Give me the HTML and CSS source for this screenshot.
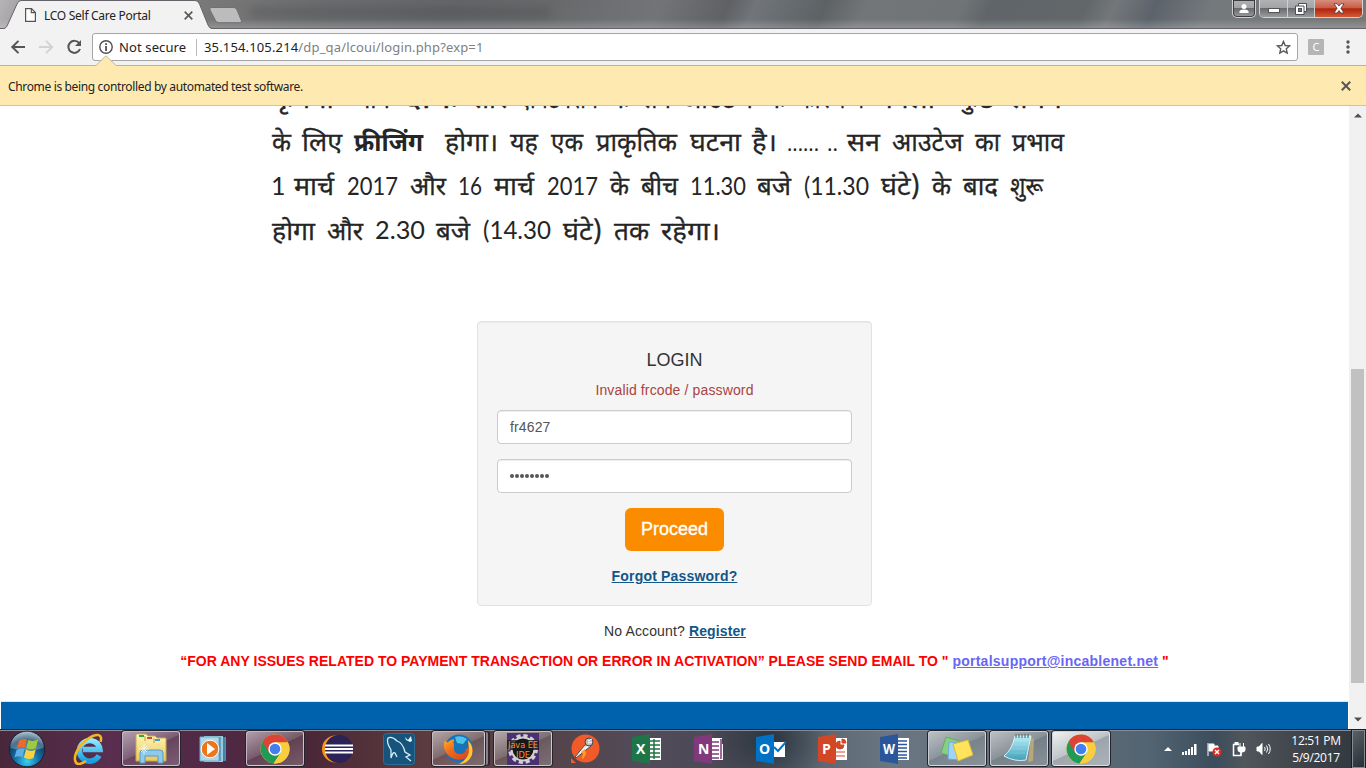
FILE: index.html
```
<!DOCTYPE html>
<html lang="en">
<head>
<meta charset="utf-8">
<title>LCO Self Care Portal</title>
<link rel="stylesheet" href="styles.css">
</head>
<body>
<svg class="defs" width="0" height="0">
  <defs>
    <linearGradient id="gold" x1="0" y1="0" x2="0" y2="1"><stop offset="0" stop-color="#fff6b8"/><stop offset="1" stop-color="#e9c95c"/></linearGradient>
    <radialGradient id="orb" cx=".5" cy=".85" r=".85"><stop offset="0" stop-color="#37d2f4"/><stop offset=".4" stop-color="#156ea5"/><stop offset=".72" stop-color="#123e63"/><stop offset="1" stop-color="#9bb6c6"/></radialGradient>
    <linearGradient id="ie" x1="0" y1="0" x2="0" y2="1"><stop offset="0" stop-color="#8fe6ff"/><stop offset="1" stop-color="#159fe0"/></linearGradient>
    <linearGradient id="glass" x1="0" y1="0" x2="0" y2="1"><stop offset="0" stop-color="#b9eef8"/><stop offset="1" stop-color="#3d9fba"/></linearGradient>
    <linearGradient id="fox" x1="0" y1="0" x2="1" y2="1"><stop offset="0" stop-color="#ffb22e"/><stop offset=".4" stop-color="#ee6a1b"/><stop offset="1" stop-color="#d63a22"/></linearGradient>
  </defs>
  <symbol id="chrome" viewBox="0 0 30 30">
    <circle cx="15" cy="15" r="14.5" fill="#f9ce3e"/>
    <path d="M15 15 2.5 7.7A14.5 14.5 0 0 0 13.6 29.4L21.300 18.5Z" fill="#219a55"/>
    <path d="M15 8.500H28A14.500 14.500 0 0 0 2.500 7.700L9 18.500Z" fill="#dc4535"/>
    <path d="m20.900 18-7.300 11.400A14.500 14.500 0 0 0 28 8.500H15Z" fill="#f9ce3e"/>
    <circle cx="15" cy="15" r="6.700" fill="#fff"/><circle cx="15" cy="15" r="5.300" fill="#4380ee"/>
  </symbol>
</svg>

<header class="titlebar">
  <div class="tab">
    <svg class="tab-shape" width="212" height="29"><path d="M0 28.500H4Q6.500 28 7.500 25L17 4Q18.500.5 21 .5H195Q198 .5 199.500 4L208 25Q209.500 28.500 212 28.500V30H0Z" fill="#f2f2f2" stroke="#66626a"/></svg>
    <div class="tab-body">
      <svg width="11" height="14" viewBox="0 0 11 14"><path d="M.6.6H6.500L10.400 4.500V13.400H.6ZM6.300.8V4.700H10.200" fill="#fff" stroke="#555" stroke-width="1.200"/></svg>
      <span class="tab-title">LCO Self Care Portal</span>
      <svg width="9" height="9" viewBox="0 0 9 9"><path d="M.7.7 8.300 8.300M8.300.7.7 8.300" stroke="#5a5a5a" stroke-width="1.700"/></svg>
    </div>
  </div>
  <svg class="new-tab" width="36" height="18"><path d="M2.500.5H25Q27 .5 28 3L32.500 14Q33 15.700 31 15.700H10Q7.500 15.700 6.500 13.500L1 3Q0 .5 2.500.5Z" fill="#bcbcbc" stroke="#707073"/></svg>
  <div class="backdrop-title"></div>
  <div class="window-buttons">
    <div class="wb user"><svg width="10" height="11" viewBox="0 0 10 11"><circle cx="5" cy="3.500" r="2.500" fill="#fff"/><path d="M.5 10V8.500Q1 6.500 5 6.500T9.500 8.500V10Z" fill="#fff"/></svg></div>
    <div class="wb-group">
      <div class="wb min"><svg width="12" height="5"><rect x=".5" y=".5" width="11" height="4" fill="#fff" stroke="#555"/></svg></div>
      <div class="wb max"><svg width="12" height="12"><path d="M3.500.5H11.500V8.500H9V11.500H.5V3H3.500Z" fill="#fff" stroke="#4d4d59"/><rect x="3.500" y="5.500" width="3" height="3" fill="#777" stroke="#4d4d59"/><path d="M3.500 3H9V8.500" fill="none" stroke="#4d4d59"/></svg></div>
      <div class="wb close"><svg width="12" height="11"><path d="M1 .8H4.200L6 3.100 7.800.8H11L7.900 5.300 11 10H7.800L6 7.500 4.200 10H1L4.100 5.300Z" fill="#fff" stroke="#5c3034" stroke-width=".8"/></svg></div>
    </div>
  </div>
</header>

<nav class="toolbar">
  <svg class="nav-icons" width="84" height="22" viewBox="0 0 84 22" fill="none" stroke-width="2">
    <path d="M25 11H13M18.500 4.900 12.300 11 18.500 17.100" stroke="#555"/>
    <path d="M39 11H52M46 4.900 52.200 11 46 17.100" stroke="#d3d3d3"/>
    <path d="M79.300 7.400A6 6 0 1 0 80 13" stroke="#555"/><path d="M81 4V10H75Z" fill="#555"/>
  </svg>
  <div class="omnibox">
    <svg width="14" height="14" viewBox="0 0 14 14"><circle cx="7" cy="7" r="6.200" fill="none" stroke="#4f4f4f" stroke-width="1.400"/><path d="M6.200 6h1.700v5H6.200ZM6.200 3.200h1.700v1.700H6.200Z" fill="#444"/></svg>
    <span class="insecure">Not secure</span>
    <span class="divider"></span>
    <span class="url">35.154.105.214<span class="path">/dp_qa/lcoui/login.php?exp=1</span></span>
    <svg class="star" width="15" height="15" viewBox="0 0 15 15"><path d="m7.500 1.500 1.700 4 4.300.4-3.200 2.900.9 4.300-3.700-2.200-3.700 2.200.9-4.300L1.500 5.900l4.300-.4Z" fill="none" stroke="#5a5a5a" stroke-width="1.400"/></svg>
  </div>
  <span class="ext">C</span>
  <svg class="kebab" width="4" height="14"><circle cx="2" cy="2" r="1.700"/><circle cx="2" cy="7" r="1.700"/><circle cx="2" cy="12" r="1.700"/></svg>
</nav>

<div class="infobar">
  <svg class="notch" width="22" height="12"><path d="M0 11 11 .5 22 11V12H0Z" fill="#feeab1"/><path d="M0 10.500H1L11 .8 21 10.500H22" fill="none" stroke="#bfb9a8"/></svg>
  <span class="info-text">Chrome is being controlled by automated test software.</span>
  <svg width="10" height="10" viewBox="0 0 10 10"><path d="M.8.8 9.200 9.200M9.200.8.8 9.200" stroke="#555" stroke-width="2"/></svg>
</div>

<div class="viewport">
  <main class="page">
    <svg class="notice" width="820" height="150" viewBox="260 106 820 150">
      <g>
        <text x="272" y="107.500" textLength="62" lengthAdjust="spacingAndGlyphs">कृपया</text>
        <text x="347" y="107.500" textLength="43" lengthAdjust="spacingAndGlyphs">ध्यान</text>
        <text x="402" y="107.500" textLength="57" lengthAdjust="spacingAndGlyphs">देंकि</text>
        <text x="471" y="107.500" textLength="36" lengthAdjust="spacingAndGlyphs">सौर</text>
        <text x="518" y="107.500" textLength="80" lengthAdjust="spacingAndGlyphs">एक्टिवेशन</text>
        <text x="610" y="107.500" textLength="20" lengthAdjust="spacingAndGlyphs">के</text>
        <text x="641" y="107.500" textLength="30" lengthAdjust="spacingAndGlyphs">सन</text>
        <text x="682" y="107.500" textLength="71" lengthAdjust="spacingAndGlyphs">आउटेज</text>
        <text x="766" y="107.500" textLength="20" lengthAdjust="spacingAndGlyphs">के</text>
        <text x="798" y="107.500" textLength="66" lengthAdjust="spacingAndGlyphs">कारण में</text>
        <text x="875" y="107.500" textLength="60" lengthAdjust="spacingAndGlyphs">चैनलों</text>
        <text x="959" y="107.500" textLength="37" lengthAdjust="spacingAndGlyphs">कुछ</text>
        <text x="1008" y="107.500" textLength="54" lengthAdjust="spacingAndGlyphs">समय</text>
      </g>
      <g>
        <text x="272" y="151" textLength="19" lengthAdjust="spacingAndGlyphs">के</text>
        <text x="302" y="151" textLength="40" lengthAdjust="spacingAndGlyphs">लिए</text>
        <text class="heavy" x="354" y="151" textLength="69" lengthAdjust="spacingAndGlyphs">फ्रीजिंग</text>
        <text x="445" y="151" textLength="53" lengthAdjust="spacingAndGlyphs">होगा।</text>
        <text x="510" y="151" textLength="28" lengthAdjust="spacingAndGlyphs">यह</text>
        <text x="551" y="151" textLength="32" lengthAdjust="spacingAndGlyphs">एक</text>
        <text x="596" y="151" textLength="81" lengthAdjust="spacingAndGlyphs">प्राकृतिक</text>
        <text x="690" y="151" textLength="51" lengthAdjust="spacingAndGlyphs">घटना</text>
        <text x="752" y="151" textLength="25" lengthAdjust="spacingAndGlyphs">है।</text>
        <text class="dots" x="787" y="151" textLength="32" lengthAdjust="spacingAndGlyphs">......</text>
        <text class="dots" x="827" y="151" textLength="11" lengthAdjust="spacingAndGlyphs">..</text>
        <text x="847" y="151" textLength="33" lengthAdjust="spacingAndGlyphs">सन</text>
        <text x="892" y="151" textLength="71" lengthAdjust="spacingAndGlyphs">आउटेज</text>
        <text x="975" y="151" textLength="25" lengthAdjust="spacingAndGlyphs">का</text>
        <text x="1012" y="151" textLength="52" lengthAdjust="spacingAndGlyphs">प्रभाव</text>
      </g>
      <g>
        <text class="num" x="271" y="195">1</text>
        <text x="294" y="195" textLength="40" lengthAdjust="spacingAndGlyphs">मार्च</text>
        <text class="num" x="347" y="195" textLength="51" lengthAdjust="spacingAndGlyphs">2017</text>
        <text x="410" y="195" textLength="36" lengthAdjust="spacingAndGlyphs">और</text>
        <text class="num" x="458" y="195" textLength="24" lengthAdjust="spacingAndGlyphs">16</text>
        <text x="494" y="195" textLength="40" lengthAdjust="spacingAndGlyphs">मार्च</text>
        <text class="num" x="547" y="195" textLength="51" lengthAdjust="spacingAndGlyphs">2017</text>
        <text x="610" y="195" textLength="19" lengthAdjust="spacingAndGlyphs">के</text>
        <text x="641" y="195" textLength="37" lengthAdjust="spacingAndGlyphs">बीच</text>
        <text class="num" x="690" y="195" textLength="56" lengthAdjust="spacingAndGlyphs">11.30</text>
        <text x="757" y="195" textLength="34" lengthAdjust="spacingAndGlyphs">बजे</text>
        <text class="num" x="804" y="195" textLength="65" lengthAdjust="spacingAndGlyphs">(11.30</text>
        <text x="881" y="195" textLength="39" lengthAdjust="spacingAndGlyphs">घंटे)</text>
        <text x="932" y="195" textLength="19" lengthAdjust="spacingAndGlyphs">के</text>
        <text x="963" y="195" textLength="35" lengthAdjust="spacingAndGlyphs">बाद</text>
        <text x="1010" y="195" textLength="33" lengthAdjust="spacingAndGlyphs">शुरू</text>
      </g>
      <g>
        <text x="272" y="240" textLength="43" lengthAdjust="spacingAndGlyphs">होगा</text>
        <text x="327" y="240" textLength="36" lengthAdjust="spacingAndGlyphs">और</text>
        <text class="num" x="375" y="239" textLength="50" lengthAdjust="spacingAndGlyphs">2.30</text>
        <text x="436" y="240" textLength="34" lengthAdjust="spacingAndGlyphs">बजे</text>
        <text class="num" x="483" y="239" textLength="68" lengthAdjust="spacingAndGlyphs">(14.30</text>
        <text x="563" y="240" textLength="39" lengthAdjust="spacingAndGlyphs">घंटे)</text>
        <text x="614" y="240" textLength="35" lengthAdjust="spacingAndGlyphs">तक</text>
        <text x="661" y="240" textLength="59" lengthAdjust="spacingAndGlyphs">रहेगा।</text>
      </g>
    </svg>
    <form class="login">
      <h1 class="login-title">LOGIN</h1>
      <p class="error">Invalid frcode / password</p>
      <div class="field">fr4627</div>
      <div class="field password"><i></i><i></i><i></i><i></i><i></i><i></i><i></i><i></i></div>
      <button class="proceed" type="button">Proceed</button>
      <a class="link forgot">Forgot Password?</a>
    </form>
    <p class="register">No Account? <a class="link">Register</a></p>
    <p class="support">“FOR ANY ISSUES RELATED TO PAYMENT TRANSACTION OR ERROR IN ACTIVATION” PLEASE SEND EMAIL TO " <a class="mail">portalsupport@incablenet.net</a> "</p>
    <footer class="footer"></footer>
  </main>
  <aside class="scrollbar">
    <svg width="8" height="5"><path d="M0 4.500 4 .5 8 4.500Z" fill="#505050"/></svg>
    <span class="thumb"></span>
    <svg width="8" height="5"><path d="M0 .5H8L4 4.500Z" fill="#505050"/></svg>
  </aside>
</div>

<div class="taskbar">
  <div class="start"><svg width="38" height="38" viewBox="0 0 38 38"><circle cx="19" cy="19" r="17.800" fill="url(#orb)" stroke="#1a2534"/><path d="M2.500 18A16.500 16.500 0 0 1 35.500 18Q19 23 2.500 18Z" fill="#fff" opacity=".25"/><path d="M11 10.500Q15 8 18.800 9.500L16.800 17.500Q12.500 16 9 18.500Z" fill="#ed6a2d"/><path d="M20.300 10Q25 12 30 9.500L28 18Q23 20.500 18.300 18Z" fill="#9ccb3b"/><path d="M8.500 20Q12.500 17.500 16.500 19L14.500 27Q10.500 25.500 6.500 27.500Z" fill="#62aee6"/><path d="M18 19.500Q23 22 27.700 19.500L25.500 28Q20.500 30 15.900 27.500Z" fill="#fbd23d"/></svg></div>
  <div class="slot"><svg width="32" height="32" viewBox="0 0 32 32"><path d="M26 22.500A10.300 10.300 0 1 1 27 16.500H10" fill="none" stroke="url(#ie)" stroke-width="5.500"/><path d="M27.500 9C30 1 24 0 16 5S1 20 2 27s8 3 11 1" fill="none" stroke="#f5b81c" stroke-width="2.500"/></svg></div>
  <div class="slot open"><svg width="32" height="32" viewBox="0 0 32 32"><path d="M1 4V2Q1 1 2 1H11L13 3H20L22 5H30Q31 5 31 6V28H1Z" fill="url(#gold)" stroke="#c8aa50"/><path d="M4 2h5v2H4Z" fill="#26ad44"/><path d="M12 4h5v2h-5Z" fill="#d84839"/><path d="M20 6h5v2h-5Z" fill="#3b9cd7"/><path d="M10 3V8M19 5V10" stroke="#bb9945"/><path d="M5 30V20Q5 17 8 17H25Q28 17 28 20V30H23V23H10V30Z" fill="#8dcaee" stroke="#5b9abd"/><path d="M9 11V21M4 16H14M6 13 12 19M12 13 6 19" stroke="#fff" opacity=".8"/></svg></div>
  <div class="slot"><svg width="28" height="28" viewBox="0 0 28 28"><path d="M8 2H27V26H8Z" fill="#4b91b1"/><path d="M5 1H24V27H5Z" fill="#97c9df"/><path d="M1 2H20V26H1Z" fill="#b0d7e8" stroke="#6eaccb"/><path d="M21 2V26M25 2V26" stroke="#37789b"/><circle cx="11" cy="14" r="8.800" fill="#ed751b" stroke="#fff"/><path d="m8 8 8 6-8 6Z" fill="#fff"/></svg></div>
  <div class="slot open"><svg width="30" height="30"><use href="#chrome"/></svg></div>
  <div class="slot"><svg width="32" height="30" viewBox="0 0 32 30"><circle cx="14.500" cy="15" r="13.500" fill="#f7941e"/><circle cx="18" cy="15" r="14" fill="#2c2255"/><path d="M4 11.500H32M4 15H32M4 18.500H32" stroke="#fff" stroke-width="2"/></svg></div>
  <div class="slot"><svg width="32" height="32" viewBox="0 0 32 32"><rect x=".5" y=".5" width="31" height="31" rx="3" fill="#17547d" stroke="#2a7096"/><path d="M8 25 8 17Q3 9 5 5 9 3 14 8 20 10 22 19L27 22 23 24 28 28M8 25Q10 18 12 20L14 24" fill="none" stroke="#d9edf4" stroke-width="1.300"/><path d="m22 4 3 3 3-4 1 5-2 1-4-2-1-3" fill="#e8f5fa"/></svg></div>
  <div class="slot stacked"><svg width="31" height="31" viewBox="0 0 31 31"><circle cx="16" cy="14.500" r="14" fill="#1473b9"/><path d="M2 6Q3 9 5 8 8 5 12 5L10 9Q13 10 15 11L11 15Q12 20 17 20 22 20 23 15 27 14 25 7 30 10 30 17A14.500 13.500 0 1 1 2 6Z" fill="url(#fox)"/><path d="M11 15Q12 20 17 20 22 20 23 15 22 13 20 13 24 10 21 3L11 4Z" fill="#1874b5"/><path d="M12 3Q19 1 24 5L20 10 14 9Z" fill="#4ec1ea"/><path d="M25 6Q31 13 29 21 25 30 16 30 27 24 26 14Z" fill="#ffc837"/></svg></div>
  <div class="slot open"><svg width="32" height="32" viewBox="0 0 32 32"><rect width="32" height="32" fill="#4b3073"/><circle cx="16" cy="16" r="13" fill="none" stroke="#d0d0d0" stroke-width="4" stroke-dasharray="4 2.810"/><circle cx="16" cy="16" r="11.500" fill="#171717" stroke="#d0d0d0" stroke-width="2"/><path d="M0 7H32V17H0Z" fill="#1b161c" opacity=".8"/><text class="java" x="1" y="15" textLength="30" lengthAdjust="spacingAndGlyphs">Java EE</text><text class="java" x="9" y="25" textLength="14" lengthAdjust="spacingAndGlyphs">IDE</text></svg></div>
  <div class="slot"><svg width="30" height="30" viewBox="0 0 30 30"><circle cx="15.500" cy="14.500" r="14" fill="#f15a29"/><path d="M1 24V29H6Z" fill="#f15a29"/><path d="m14 12 4-3 3 3-5 4L6 24l-1-1Z" fill="#efefef" stroke="#514943"/><path d="m15 15 1 5-3 5-1-1 1-4-2-2Z" fill="#f8a12e"/><circle cx="19" cy="8" r="4" fill="#bcbcbc" stroke="#454545"/><path d="m18 7 4-2M18 9l4-1" stroke="#fff"/></svg></div>
  <div class="slot office"><svg width="30" height="30" viewBox="0 0 30 30"><path d="M16 4H29V26H16Z" fill="#fff"/><path d="M17 7H28M17 11H28M17 15H28M17 19H28M17 23H28M22 5V25" stroke="#217346" stroke-width="1.500"/><path d="M0 3 18 0V30L0 27Z" fill="#1f7547"/><text x="4" y="20">X</text></svg></div>
  <div class="slot office"><svg width="30" height="30" viewBox="0 0 30 30"><path d="M16 4H28V10H29V26H16Z" fill="#fff"/><path d="M18 8H25M18 12H25M18 16H25M18 20H25M18 24H25M27 5V25" stroke="#80397b" stroke-width="1.500"/><path d="M0 3 18 0V30L0 27Z" fill="#80397b"/><text x="4" y="20">N</text></svg></div>
  <div class="slot office"><svg width="30" height="30" viewBox="0 0 30 30"><path d="M16 8H29V23H16Z" fill="#fff"/><path d="m18 13 4 4 8-9" fill="none" stroke="#0072c6" stroke-width="2"/><path d="M0 3 18 0V30L0 27Z" fill="#0072c6"/><text x="3" y="20">O</text></svg></div>
  <div class="slot office"><svg width="30" height="30" viewBox="0 0 30 30"><path d="M16 4H29V26H16Z" fill="#fff"/><path d="M22 7A4 4 0 1 0 26 11H22ZM24 5V9H28A4 4 0 0 0 24 5ZM18 18H27M18 22H27" fill="#d24726" stroke="#d24726"/><path d="M0 3 18 0V30L0 27Z" fill="#d24726"/><text x="4" y="20">P</text></svg></div>
  <div class="slot office"><svg width="30" height="30" viewBox="0 0 30 30"><path d="M16 4H29V26H16Z" fill="#fff"/><path d="M17 7H27M17 10.500H27M17 14H27M17 17.500H27M17 21H27M17 24H27" stroke="#2b579a" stroke-width="1.500"/><path d="M0 3 18 0V30L0 27Z" fill="#2b579a"/><text x="3" y="20" textLength="12" lengthAdjust="spacingAndGlyphs">W</text></svg></div>
  <div class="slot open"><svg width="32" height="26" viewBox="0 0 32 26"><path d="m5 1 13 4-5 16L0 17Z" fill="#88cf82" stroke="#62ad62"/><path d="m8 6 14 1-2 17-13-1Z" fill="#a0d4f4" stroke="#6badd6"/><path d="M12 8 27 4 32 19 17 25Z" fill="#ffe35d" stroke="#d6b736"/></svg></div>
  <div class="slot open"><svg width="32" height="32" viewBox="0 0 32 32"><path d="M28 4 31 6 30 28 25 29Z" fill="#b8a77a"/><path d="M12 3H28L23 27Q12 29 1 23Q9 17 12 3Z" fill="url(#glass)" stroke="#d6f5f8"/><path d="M12 8H25M11 12H24M9 16H23M7 20H22" stroke="#e0faff" opacity=".15"/><path d="M13 1V5M16 1V5M19 1V5M22 1V5M25 1V5" stroke="#4b5b63"/></svg></div>
  <div class="slot open active"><svg width="30" height="30"><use href="#chrome"/></svg></div>
  <div class="tray">
    <svg width="8" height="4"><path d="M0 4 4 0 8 4Z" fill="#fff"/></svg>
    <svg width="16" height="13" fill="#fff"><path d="M0 9h2v3H0ZM3 8h2v4H3ZM6 6h2v6H6ZM9 4h2v8H9ZM12 1h2.500v11H12Z"/></svg>
    <svg width="15" height="15"><path d="M1 1V14M2 2H7V4H11V9H2Z" fill="#fff" stroke="#fff"/><circle cx="10" cy="10" r="4.500" fill="#db2b22"/><path d="m8 8 4 4m0-4-4 4" stroke="#fff" stroke-width="1.400"/></svg>
    <svg width="15" height="15" fill="none" stroke="#fff"><path d="M7 2.500H1.500V13.500H9V10" stroke-width="1.500"/><path d="M3 0H6V2H3Z" fill="#fff"/><path d="M6 5H13V8Q13 10 10 10H9Q6 10 6 8Z" fill="#fff"/><path d="M8 1V5M11.500 1V5M9 10V13"/></svg>
    <svg width="17" height="14" fill="none" stroke="#fff"><path d="M1 5H3L6 1.500V12.500L3 9H1Z" fill="#fff"/><path d="M8.500 5Q10 7 8.500 9M10.500 3.500Q13 7 10.500 10.500M12.500 2Q16 7 12.500 12"/></svg>
  </div>
  <div class="clock"><span class="time">12:51 PM</span><span class="date">5/9/2017</span></div>
  <div class="show-desktop"></div>
</div>
</body>
</html>
```
FILE: styles.css
```
* { box-sizing: border-box; }
body { margin: 0; width: 1366px; height: 768px; overflow: hidden; display: flex; flex-direction: column; background: #fff; font-family: "Liberation Sans", Arial, sans-serif; color: #333; }
svg { display: block; flex: none; }
.defs { position: absolute; }
p, h1 { margin: 0; }

.titlebar { height: 29px; flex: none; display: flex; position: relative; border-bottom: 1px solid #66626a; background: linear-gradient(transparent 68%, rgba(255,255,255,.2)), linear-gradient(115deg, #b7b4b7 0, #8b898c 4%, #777 16%, #6c6d6f 23%, #636568 33%, #68696b 40%, #737477 48%, #5f6164 53%, #717579 55%, #5d6265 60%, #737679 63%, #707477 70%, #5f6568 72%, #62686a 79%, #74777a 81%, #5c636b 84%, #74797c 88%, #777 100%); }
.tab { width: 212px; height: 29px; position: relative; flex: none; }
.tab-shape { position: absolute; left: 0; top: 0; }
.tab-body { position: relative; display: flex; align-items: center; height: 30px; padding-left: 25px; }
.tab-title { width: 148px; padding-left: 8px; font: 12px "Noto Sans", sans-serif; letter-spacing: -.28px; color: #222; white-space: nowrap; }
.new-tab { margin: 7px 0 0 -3px; }
.backdrop-title { width: 300px; height: 8px; margin: 8px 0 0 5px; background: #3f4144; filter: blur(5px); opacity: .35; }
.window-buttons { display: flex; gap: 3px; margin-left: auto; padding-right: 3px; }
.wb { height: 17px; display: flex; align-items: center; justify-content: center; background: linear-gradient(#b2b2b4 0, #a1a2a4 48%, #696b6e 50%, #9a9b9d 100%); }
.user { width: 24px; height: 18px; border: 1px solid #d0d0d0; border-top: 0; border-radius: 0 0 5px 5px; box-shadow: inset 0 0 0 1px #3c3e41; }
.wb-group { display: flex; height: 18px; border: 1px solid #d2d2d2; border-top: 0; border-radius: 0 0 5px 5px; overflow: hidden; }
.min { width: 28px; padding-top: 3px; border-right: 1px solid #cfcfcf; }
.max { width: 27px; border-right: 1px solid #ccc; }
.close { width: 47px; background: linear-gradient(#d68d7e 0, #c95a43 48%, #ae240c 51%, #d55935 100%); }

.toolbar { height: 37px; flex: none; display: flex; align-items: center; background: #f2f2f2; border-bottom: 1px solid #b5b2ad; }
.nav-icons { margin-right: 8px; }
.omnibox { width: 1206px; height: 28px; display: flex; align-items: center; padding: 0 6px; background: #fff; border: 1px solid #a6a6a6; border-radius: 3px; font: 13px "Noto Sans", sans-serif; white-space: nowrap; color: #222; }
.insecure { width: 83px; padding-left: 6px; letter-spacing: .12px; }
.divider { width: 1px; height: 17px; background: #bbb; margin-right: 7px; }
.url { letter-spacing: .15px; }
.path { color: #808080; }
.star { margin-left: auto; }
.ext { width: 16px; height: 16px; margin-left: 10px; border-radius: 1px; background: #b5b5b5; color: #fff; font: 11px/16px "Noto Sans", sans-serif; text-align: center; }
.kebab { margin-left: 22px; fill: #555; }

.infobar { height: 40px; flex: none; position: relative; z-index: 2; display: flex; align-items: center; justify-content: space-between; padding: 0 15px 0 8px; background: #feeab1; border-bottom: 1px solid #cbc3ad; }
.notch { position: absolute; left: 95px; top: -11px; }
.info-text { font: 12px "Noto Sans", sans-serif; letter-spacing: -.35px; color: #222; padding-top: 2px; }

.viewport { display: flex; height: 623px; flex: none; }
.page { width: 1349px; display: flex; flex-direction: column; align-items: center; overflow: hidden; }
.notice { align-self: flex-start; margin-left: 260px; font: 25px "Noto Sans Devanagari", "Noto Sans", "Lohit Devanagari", Lato, sans-serif; fill: #252525; stroke: #252525; stroke-width: .3px; }
.heavy { font-weight: bold; stroke: none; }
.num { font-family: Lato, sans-serif; stroke: none; }
.dots { font-size: 20px; stroke: none; }
.login { width: 395px; height: 285px; margin-top: 65px; padding: 28px 19px 0; display: flex; flex-direction: column; align-items: center; background: #f5f5f5; border: 1px solid #e3e3e3; border-radius: 4px; box-shadow: inset 0 1px 1px rgba(0,0,0,.05); flex: none; }
.login-title { font-size: 18px; line-height: 20px; font-weight: normal; }
.error { margin: 10px 0; font-size: 14px; line-height: 20px; letter-spacing: .13px; color: #a94442; }
.field { width: 355px; height: 34px; flex: none; margin-bottom: 15px; padding: 6px 12px; border: 1px solid #ccc; border-radius: 4px; background: #fff; box-shadow: inset 0 1px 1px rgba(0,0,0,.075); font-size: 14px; line-height: 20px; letter-spacing: .13px; color: #555; }
.password { display: flex; align-items: center; gap: 1px; }
.password i { width: 4px; height: 4px; border-radius: 50%; background: #555; }
.proceed { width: 99px; height: 43px; flex: none; padding: 0; border: 0; border-radius: 6px; background: #fb8c00; color: #fff; font: 18px "Liberation Sans", Arial, sans-serif; -webkit-text-stroke: .35px #fff; }
.link { color: #125688; font-weight: bold; text-decoration: underline; }
.forgot { margin-top: 15px; font-size: 14px; line-height: 20px; letter-spacing: .18px; }
.register { margin-top: 15px; padding-left: 1px; font-size: 14px; line-height: 20px; letter-spacing: .13px; }
.support { margin-top: 10px; font-size: 14px; line-height: 20px; letter-spacing: .015px; font-weight: bold; color: #f00; white-space: nowrap; }
.mail { color: #6a66f5; text-decoration: underline; letter-spacing: .25px; }
.footer { width: 1347px; height: 27px; margin-top: auto; flex: none; background: #0062ad; box-shadow: 0 -1px #dfe5e8; }
.scrollbar { width: 17px; display: flex; flex-direction: column; align-items: center; background: #f1f1f1; padding: 7px 0; }
.thumb { width: 13px; height: 314px; margin: 251px 0 auto; background: #c1c1c1; }

.taskbar { height: 39px; flex: none; display: flex; align-items: center; border-top: 1px solid #29252d; box-shadow: inset 0 1px #8d8991; background: radial-gradient(ellipse 60px 50px at 770px 10px, rgba(20,32,42,.65), transparent), linear-gradient(90deg, #48273b, #592e4e 8%, #502946 15%, #4b2838 23%, #5b3b3e 31%, #554247 39%, #514b5a 47%, #4a4a55 53%, #56606a 58%, #697682 65%, #657078 75%, #536472 84%, #3b4d5c 89%, #50565b 91%, #3b4147 96%, #303840); }
.start { width: 58px; padding-left: 8px; }
.slot { width: 62px; height: 38px; flex: none; display: flex; align-items: center; justify-content: center; position: relative; border: 2px solid transparent; }
.open::before, .stacked::before { content: ""; position: absolute; inset: -1px 0 0 0; border: 1px solid rgba(230,228,235,.7); border-radius: 3px; background: linear-gradient(155deg, rgba(255,255,255,.55), rgba(255,255,255,.24) 48%, rgba(255,255,255,.12) 50%, rgba(255,255,255,.24)); box-shadow: 0 0 0 1px #25232b; }
.stacked::before { right: 5px; box-shadow: 0 0 0 1px #25232b, 4px 0 0 -1px #878088, 5px 0 0 0 #33272e; }
.slot svg { position: relative; }
.stacked svg { left: -3px; }
.active::before { background: linear-gradient(155deg, rgba(255,255,255,.9), rgba(255,255,255,.6) 48%, rgba(255,255,255,.4) 50%, rgba(255,255,255,.5)); }
.java { font: 9px "DejaVu Sans", sans-serif; fill: #ff941c; }
.office text { font: bold 14px "Open Sans", sans-serif; fill: #fff; }
.tray { width: 109px; margin-left: 52px; display: flex; align-items: center; justify-content: space-between; }
.clock { width: 79px; padding-left: 7px; display: flex; flex-direction: column; align-items: center; font: 12px/17px "Open Sans", sans-serif; letter-spacing: -.3px; color: #fff; }
.show-desktop { width: 13px; height: 38px; border: 1px solid #858b90; background: linear-gradient(135deg, #596066, #272f36); box-shadow: 0 0 0 1px #181c20; }
```
